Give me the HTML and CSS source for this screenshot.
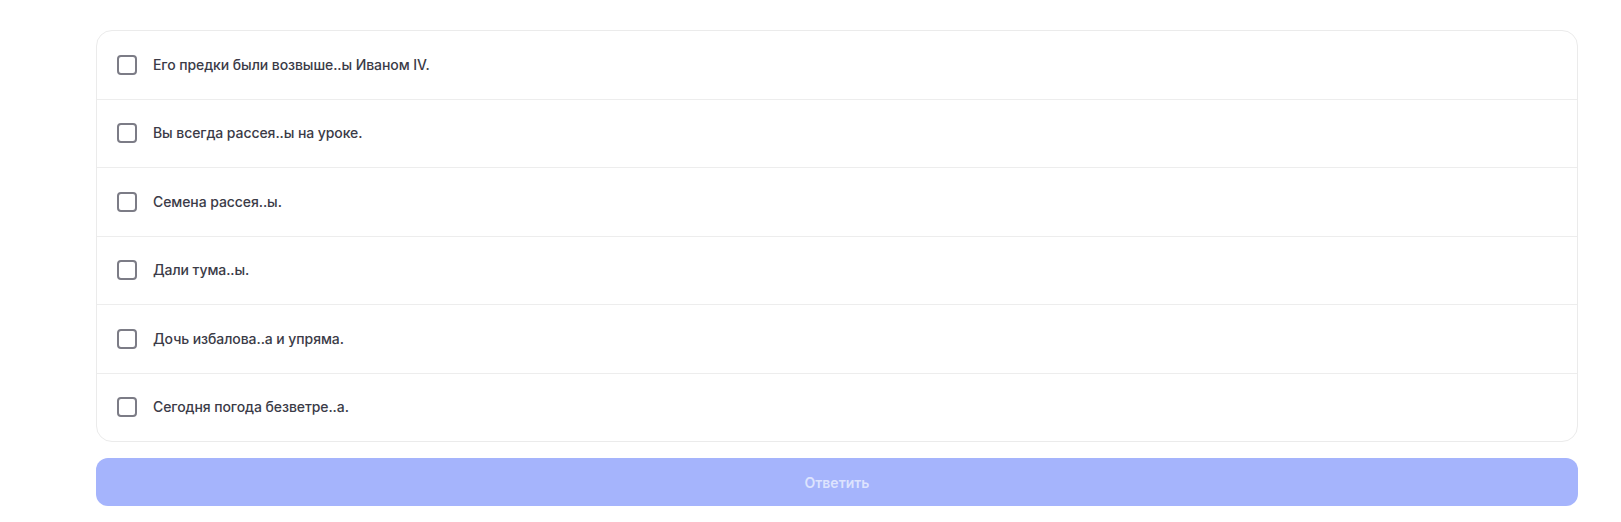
FILE: index.html
```html
<!DOCTYPE html>
<html lang="ru">
<head>
<meta charset="utf-8">
<link rel="stylesheet" href="styles.css">
</head>
<body>
<div class="wrap">
  <div class="card">
    <label class="row"><span class="box"></span><span class="txt">Его предки были возвыше..ы Иваном IV.</span></label>
    <label class="row"><span class="box"></span><span class="txt">Вы всегда рассея..ы на уроке.</span></label>
    <label class="row"><span class="box"></span><span class="txt">Семена рассея..ы.</span></label>
    <label class="row"><span class="box"></span><span class="txt">Дали тума..ы.</span></label>
    <label class="row"><span class="box"></span><span class="txt">Дочь избалова..а и упряма.</span></label>
    <label class="row"><span class="box"></span><span class="txt">Сегодня погода безветре..а.</span></label>
  </div>
  <button class="btn" type="button">Ответить</button>
</div>
</body>
</html>
```
FILE: styles.css
```css
html, body {
  margin: 0;
  padding: 0;
  background: #ffffff;
}
body {
  font-family: Inter, "Noto Sans", sans-serif;
}
.wrap {
  width: 1482px;
  margin: 30px 0 0 96px;
  display: flex;
  flex-direction: column;
  gap: 16px;
}
.card {
  border: 1px solid #ebebeb;
  border-radius: 16px;
  display: flex;
  flex-direction: column;
  overflow: hidden;
}
.row {
  height: 67.5px;
  display: flex;
  align-items: center;
  gap: 16px;
  padding: 0 20px;
  border-bottom: 1px solid #ededed;
}
.row:last-child {
  border-bottom: none;
}
.box {
  width: 20px;
  height: 20px;
  box-sizing: border-box;
  border: 2px solid #7c7c86;
  border-radius: 4px;
  flex: none;
}
.txt {
  font-size: 14px;
  font-weight: 500;
  color: #3b3b47;
  line-height: 20px;
  letter-spacing: -0.08px;
}
.btn {
  height: 48px;
  border: none;
  border-radius: 12px;
  background: #a5b4fc;
  color: #dde3fe;
  font-family: Inter, "Noto Sans", sans-serif;
  font-size: 14px;
  font-weight: 600;
  padding: 0;
}
```
